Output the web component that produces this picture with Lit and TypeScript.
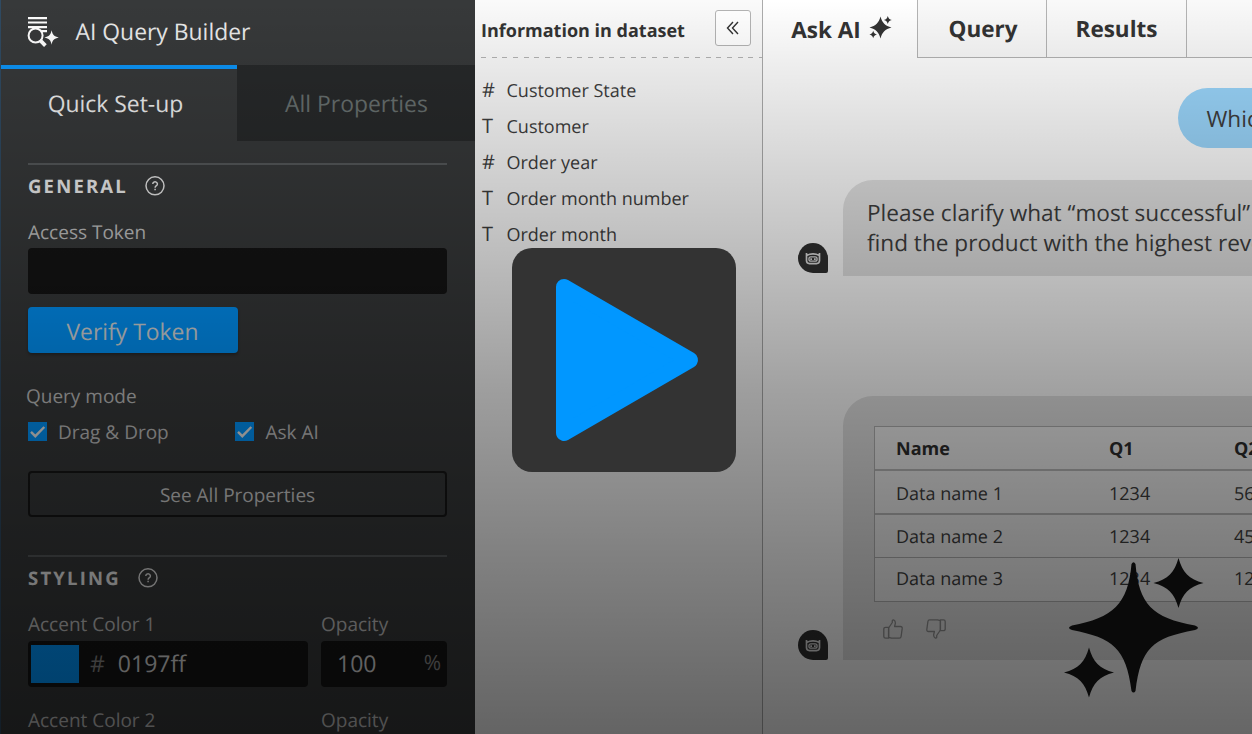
import { LitElement, html, css, svg } from "lit";
import { customElement } from "lit/decorators.js";

const star = (cx: number, cy: number, r: number, k = 0.27) => {
  const c = r * k;
  return svg`<path d="M${cx} ${cy - r}C${cx + c * 0.5} ${cy - c * 1.3} ${cx + c * 1.3} ${cy - c * 0.5} ${cx + r} ${cy}C${cx + c * 1.3} ${cy + c * 0.5} ${cx + c * 0.5} ${cy + c * 1.3} ${cx} ${cy + r}C${cx - c * 0.5} ${cy + c * 1.3} ${cx - c * 1.3} ${cy + c * 0.5} ${cx - r} ${cy}C${cx - c * 1.3} ${cy - c * 0.5} ${cx - c * 0.5} ${cy - c * 1.3} ${cx} ${cy - r}Z"/>`;
};

const base = css`
  :host { display: block; box-sizing: border-box; }
  *, *::before { box-sizing: border-box; }
  svg { display: block; flex: none; }
`;

@customElement("settings-panel")
class SettingsPanel extends LitElement {
  static styles = [base, css`
    :host { width: 475px; height: 734px; background: #37393a; color: #fff; border-left: 1px solid #2f4a62; overflow: hidden; }
    .title { display: flex; align-items: center; height: 65px; padding-left: 26px; font-size: 22.900px; gap: 16.500px; }
    .title span { color: #eaeaea; padding-bottom: 2px; }
    .tabs { display: flex; height: 76px; font-size: 22.900px; }
    .tab { width: 236px; border-top: 4px solid #0d94f7; padding-top: 19px; line-height: 32px; text-align: center; padding-right: 7px; color: #efefef; }
    .tab.off { width: 238px; border-top: 0; padding: 23px 0 0 1px; background: #27292a; color: #68706f; }
    .body { padding: 22px 28px 0 27px; }
    .rule { height: 2px; width: 419px; background: #56595b; }
    .section { display: flex; align-items: center; height: 24px; margin-top: 9px; font-size: 18.500px; font-weight: 700; letter-spacing: 2.200px; gap: 17px; margin-bottom: 21px; color: #f0f0f0; }
    .label { height: 26px; line-height: 26px; font-size: 19px; color: #c4c4c4; }
    .token { margin-bottom: 3px; }
    .mode { margin: 30px 0 0 -2px; }
    .input { height: 46px; background: #141414; border-radius: 4px; display: flex; align-items: center; font-size: 23px; color: #dadada; padding-bottom: 2px; }
    .verify { margin-top: 13px; width: 210px; height: 46px; border-radius: 4px; background: #0197ff; line-height: 49px; text-align: center; font-size: 22.900px; box-shadow: 0 2px 3px #0004; color: #dadfe2; padding-right: 1px; }
    .checks { display: flex; margin-top: 9px; height: 26px; font-size: 19px; color: #c4c4c4; }
    .check { width: 207.500px; display: flex; align-items: center; gap: 11.500px; }
    .check svg { margin-left: -0.500px; }
    .check span { padding-top: 2px; }
    .all { margin-top: 27px; height: 46px; width: 419px; border: 2px solid #161616; border-radius: 4px; line-height: 44px; text-align: center; font-size: 19px; color: #d4d4d4; }
    .second { margin-top: 38px; }
    .fields { display: grid; grid-template-columns: 280px 126px; column-gap: 13px; row-gap: 4px; }
    .swatch { width: 48px; height: 38px; margin: 1px 0 0 3px; background: #0197ff; }
    .hash { margin: 0 13px 0 11px; color: #888; }
    .num { justify-content: space-between; padding: 0 6px 2px 16px; }
    .pct { color: #888; font-size: 21px; }
    .next { margin-top: 16px; }
  `];
  help() {
    return html`<svg width="20" height="20" viewBox="0 0 20 20" fill="none" stroke="#e8e8e8" stroke-width="1.500"><circle cx="10" cy="9.800" r="9"/><path d="M7.800 8a2.300 2.100 0 1 1 3.600 1.700c-.9.6-1.300.9-1.300 2"/><path d="M10.100 12.800v1.400"/></svg>`;
  }
  check(label: string) {
    return html`<div class="check"><svg width="19" height="19" viewBox="0 0 19 19"><rect width="19" height="19" fill="#0197ff"/><path d="M3 9.800 7.300 14.200 16.300 5" fill="none" stroke="#eee" stroke-width="2.400"/></svg><span>${label}</span></div>`;
  }
  render() {
    return html`
      <div class="title">
        <svg width="32" height="32" viewBox="0 0 32 32" fill="#fff">
          <path d="M1 0h19v2.200H1zM1 4.400h19v2.200H1zM1 9h19v2.200H1zM14 13h6v2.200h-5z"/>
          <circle cx="8.600" cy="18.500" r="7" fill="#37383a" stroke="#fff" stroke-width="2"/>
          <path d="m13 23.200 5.400 5.400" stroke="#fff" stroke-width="3.800"/>
          ${star(24.600, 20.500, 7.200)}
        </svg><span>AI Query Builder</span>
      </div>
      <div class="tabs"><div class="tab">Quick Set-up</div><div class="tab off">All Properties</div></div>
      <div class="body">
        <div class="rule"></div>
        <div class="section">GENERAL ${this.help()}</div>
        <div class="label token">Access Token</div>
        <div class="input"></div>
        <div class="verify">Verify Token</div>
        <div class="label mode">Query mode</div>
        <div class="checks">${this.check("Drag & Drop")}${this.check("Ask AI")}</div>
        <div class="all">See All Properties</div>
        <div class="rule second"></div>
        <div class="section">STYLING ${this.help()}</div>
        <div class="fields">
          <div class="label">Accent Color 1</div><div class="label">Opacity</div>
          <div class="input"><div class="swatch"></div><span class="hash">#</span>0197ff</div>
          <div class="input num">100<span class="pct">%</span></div>
          <div class="label next">Accent Color 2</div><div class="label next">Opacity</div>
        </div>
      </div>`;
  }
}

@customElement("dataset-panel")
class DatasetPanel extends LitElement {
  static styles = [base, css`
    :host { width: 288px; height: 734px; background: #fafafa; border-right: 1px solid #acacac; color: #3e3e3e; }
    .head { display: flex; justify-content: space-between; align-items: center; height: 57px; padding: 0 11px 0 6px; font-size: 18px; font-weight: 700; color: #333; }
    .head span { padding-top: 4px; }
    .collapse { width: 36px; height: 36px; border: 1px solid #b4b4b4; border-radius: 3px; display: grid; place-items: center; background: #fff; margin-bottom: 1px; }
    .dash { height: 1px; background: repeating-linear-gradient(90deg, #b4b4b4 0 5px, transparent 5px 10.700px); margin-left: 6px; }
    .list { padding: 15px 0 0 7px; }
    .item { height: 36px; display: flex; align-items: center; font-size: 18px; }
    .item b { width: 24.500px; font-weight: 400; font-size: 20px; line-height: 34px; padding-bottom: 2px; }
  `];
  render() {
    const rows = [["#", "Customer State"], ["T", "Customer"], ["#", "Order year"], ["T", "Order month number"], ["T", "Order month"]];
    return html`
      <div class="head"><span>Information in dataset</span>
        <div class="collapse"><svg width="14" height="14" viewBox="0 0 14 14" fill="none" stroke="#333" stroke-width="1.400"><path d="M7 1 1.500 7 7 13M12 1 6.500 7 12 13"/></svg></div>
      </div>
      <div class="dash"></div>
      <div class="list">${rows.map(([t, n]) => html`<div class="item"><b>${t}</b>${n}</div>`)}</div>`;
  }
}

@customElement("chat-panel")
class ChatPanel extends LitElement {
  static styles = [base, css`
    :host { width: 489px; height: 734px; background: #fff; color: #3e3e3e; overflow: hidden; }
    .tabs { display: flex; height: 58px; font-size: 22.500px; font-weight: 700; color: #333; }
    .tab { display: flex; align-items: center; justify-content: center; background: #f9f9f9; border-left: 1px solid #b4b4b4; border-bottom: 1px solid #b4b4b4; }
    .ask { width: 154px; background: #fff; border: 0; gap: 8px; padding-left: 3px; }
    .ask svg { margin-bottom: 3px; }
    .q { width: 129px; padding-left: 2px; } .r { width: 140px; } .rest { flex: 1; }
    .user { margin: 30px 0 0 415px; width: 240px; height: 60px; border-radius: 30px; background: #9bd7fd; padding-left: 28.500px; font-size: 22.600px; line-height: 62px; white-space: nowrap; }
    .msg { display: flex; align-items: flex-end; margin: 32px 0 0 35px; }
    .msg.later { margin-top: 120px; }
    .avatar { width: 30px; height: 30px; border-radius: 15px 15px 2px 15px; background: #303030; display: grid; place-items: center; margin: 0 15px 3px 0; flex: none; }
    .later .avatar { margin-bottom: 0; }
    .bubble { width: 620px; flex: none; background: #e4e4e4; border-radius: 30px 30px 30px 0; }
    .text { height: 96px; padding: 18px 24px; font-size: 22.600px; line-height: 30px; white-space: nowrap; }
    .card { height: 264px; padding: 30px 0 0 31px; }
    .table { border: 1px solid #b4b4b4; background: #f3f3f3; font-size: 18px; height: 176px; }
    .row { display: grid; grid-template-columns: 213px 125px 1fr; align-items: center; padding: 2px 0 0 21px; height: 43px; border-bottom: 1px solid #b4b4b4; }
    .row.h { font-weight: 700; height: 44px; border-bottom: 2px solid #bcbcbc; color: #2e2e2e; }
    .row:nth-child(2) { height: 44px; border-bottom: 2px solid #bcbcbc; padding-top: 3px; }
    .row:last-child { border: 0; padding: 0 0 1px 21px; }
    .thumbs { display: flex; gap: 23px; padding: 17px 0 0 9px; }
    .down { transform: rotate(180deg); }
  `];
  bot() {
    return html`<div class="avatar"><svg width="16" height="13" viewBox="0 0 16 14" fill="none" stroke="#e0e0e0" stroke-width="1.800"><path d="M1 1v8.500A3.200 3.200 0 0 0 4.200 12.500h7.600A3.200 3.200 0 0 0 15 9.500V1M1.500 3.600C5 1.400 11 1.400 14.500 3.600"/><rect x="3.600" y="5.300" width="8.800" height="4.600" rx="2.200" stroke-width="1.400"/><path d="M6 6.700v1.800M10 6.700v1.800"/></svg></div>`;
  }
  thumb(cls = "") {
    return html`<svg class=${cls} width="20" height="20" viewBox="0 0 20 20" fill="none" stroke="#929292" stroke-width="1.300" stroke-linejoin="round"><path d="M5.600 9 9.300 3.500V1.600C9.300.5 12.400.5 12.400 4.200L11.600 7.500H17.500C18.700 7.500 19.300 8.300 19.200 9.400L18.100 17.500C18 18.600 17.300 19.200 16.300 19.200H8.500L5.600 18.300Z"/><path d="M5.600 8.300H2.600Q.8 8.300.8 10V17.500Q.8 19.200 2.600 19.200H5.600Z"/></svg>`;
  }
  render() {
    const rows = [["Name", "Q1", "Q2"], ["Data name 1", "1234", "5678"], ["Data name 2", "1234", "4567"], ["Data name 3", "1234", "1234"]];
    return html`
      <div class="tabs">
        <div class="tab ask">Ask AI <svg width="23" height="23" viewBox="0 0 23 23" fill="#333">${star(11.500, 11.500, 11, 0.32)}${star(18.800, 4, 4, 0.32)}${star(4.200, 18.500, 3.800, 0.32)}</svg></div>
        <div class="tab q">Query</div><div class="tab r">Results</div><div class="tab rest"></div>
      </div>
      <div class="user">Which</div>
      <div class="msg">${this.bot()}
        <div class="bubble text">Please clarify what “most successful”<br>find the product with the highest revenue</div></div>
      <div class="msg later">${this.bot()}
        <div class="bubble card">
          <div class="table">${rows.map((r, i) => html`<div class="row ${i ? "" : "h"}">${r.map((c) => html`<span>${c}</span>`)}</div>`)}</div>
          <div class="thumbs">${this.thumb()}${this.thumb("down")}</div>
        </div></div>`;
  }
}

@customElement("app-root")
class AppRoot extends LitElement {
  static styles = [base, css`
    :host { position: relative; display: flex; width: 1252px; height: 734px; overflow: hidden; font-family: "Open Sans", "Noto Sans", sans-serif; text-rendering: geometricPrecision; }
    settings-panel, dataset-panel, chat-panel { flex: none; }
    .shade { position: absolute; inset: 0; background: linear-gradient(#0000 0, #00000010 60px, #00000028 160px, #00000047 290px, #0000005e 390px, #0000007b 550px, #00000099 734px); }
    .play { position: absolute; left: 512px; top: 248px; width: 224px; height: 224px; border-radius: 20px; background: #333; }
    .stars { position: absolute; left: 1062px; top: 556px; }
  `];
  render() {
    return html`
      <settings-panel></settings-panel><dataset-panel></dataset-panel><chat-panel></chat-panel>
      <div class="shade"></div>
      <div class="play"><svg width="224" height="224" viewBox="0 0 224 224"><path d="M52 39 178 112 52 185Z" fill="#0197ff" stroke="#0197ff" stroke-width="16" stroke-linejoin="round"/></svg></div>
      <svg class="stars" width="144" height="144" viewBox="0 0 144 144" fill="#0a0a0a">
        <path d="M69.500 8Q71.500 4.500 73.500 8C77 48 90 62 133 69.500Q139 71.800 133 74C90 82 79 92 73.500 135Q71.500 138 69.500 135C64 92 51 82 10 74Q4 71.800 10 69.500C51 62 66 48 69.500 8Z"/>
        ${star(116.500, 27, 25, 0.32)}${star(27, 116.500, 25, 0.32)}
      </svg>`;
  }
}
